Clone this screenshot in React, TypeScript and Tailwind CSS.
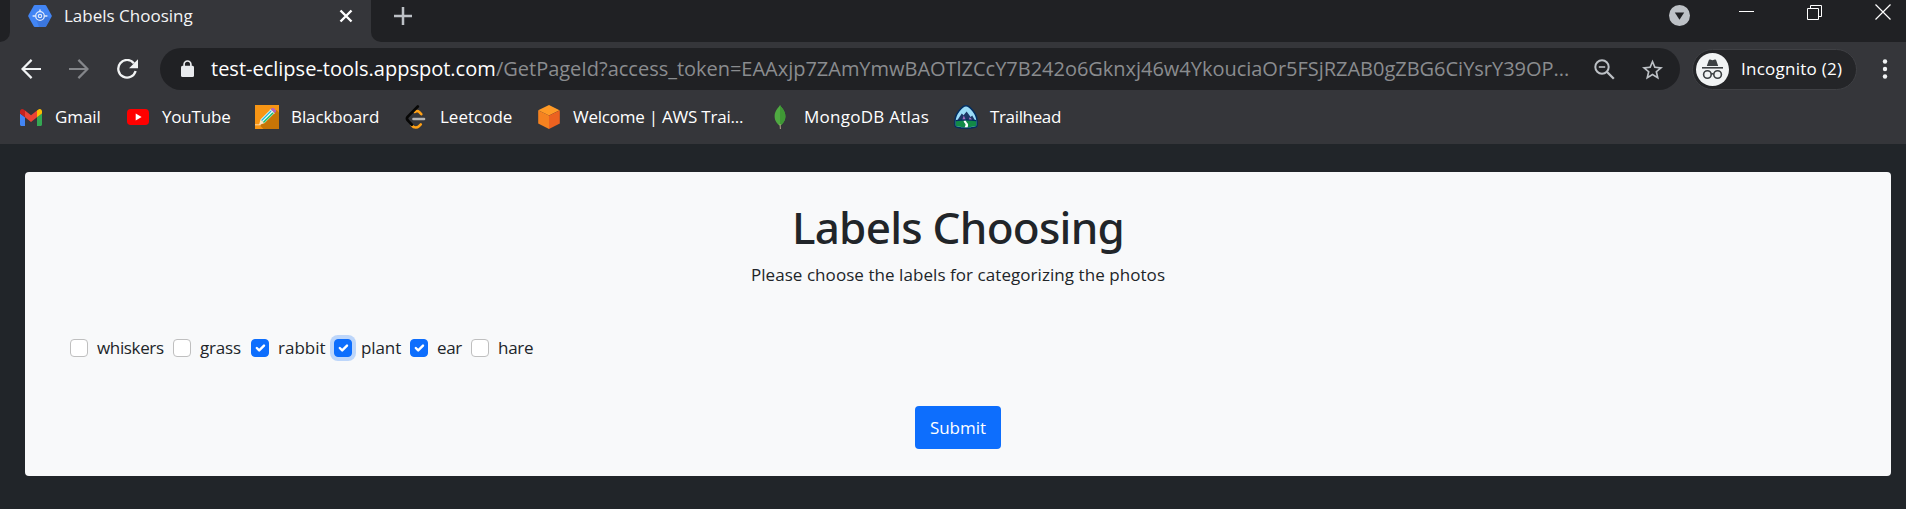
import type { ReactNode } from "react";

function CloudIcon() {
  return (
    <svg width="24" height="22" viewBox="0 0 24 22">
      <path d="M6.800 0h10.400q.7 0 1.100.7l5.300 9.500q.4.8 0 1.600l-5.300 9.500q-.4.7-1.100.7H6.800q-.7 0-1.100-.7L.4 11.800q-.4-.8 0-1.600L5.700.7Q6.100 0 6.800 0z" fill="#4285f4" />
      <path d="M16 8l6 6-3.800 7.200q-.4.8-1.100.8h-6L8 14z" fill="#3367c6" opacity=".45" />
      <g fill="none" stroke="#dfeafd">
        <circle cx="12" cy="11" r="4.300" strokeWidth="1.300" />
        <circle cx="12" cy="11" r="1.700" strokeWidth="1.200" />
        <path d="M4.600 11h3M16.400 11h3M12 4.500v2.200" strokeWidth="1.500" />
      </g>
    </svg>
  );
}

function GmailIcon() {
  return (
    <svg width="22" height="17" viewBox="52 42 88 66" preserveAspectRatio="none">
      <path fill="#4285f4" d="M58 108h14V74L52 59v43c0 3.320 2.690 6 6 6" />
      <path fill="#34a853" d="M120 108h14c3.320 0 6-2.690 6-6V59l-20 15" />
      <path fill="#fbbc04" d="M120 48v26l20-15v-8c0-7.420-8.470-11.650-14.400-7.200" />
      <path fill="#ea4335" d="M72 74V48l24 18 24-18v26L96 92" />
      <path fill="#c5221f" d="M52 51v8l20 15V48l-5.600-4.200c-5.940-4.450-14.400-.22-14.400 7.200" />
    </svg>
  );
}

function YouTubeIcon() {
  return (
    <svg width="22" height="16" viewBox="0 0 22 16">
      <rect width="22" height="16" rx="3.800" fill="#f00" />
      <path d="M8.700 4.600v6.800l5.900-3.400z" fill="#fff" />
    </svg>
  );
}

function PencilIcon() {
  return (
    <svg width="24" height="24" viewBox="0 0 24 24">
      <rect width="24" height="24" fill="#f79514" />
      <path d="M21.500 5L24 7.500V24H8.500L4 19.500z" fill="#c87506" />
      <path d="M0 19.800h6" stroke="#fbd9a5" strokeWidth="1" />
      <path d="M4 20l1.500-5.500 3.800 3.800z" fill="#fde3c0" />
      <path d="M5.500 14.500L15.800 4.200l3.800 3.800L9.300 18.300z" fill="#e9fbff" />
      <path d="M6.600 15.500L16.800 5.300" stroke="#25b8d8" strokeWidth="1.300" />
      <path d="M8.500 17.400L18.700 7.200" stroke="#1ec06a" strokeWidth="1.500" />
      <path d="M15.800 4.200l1-1q1-.8 2 0l1.800 1.800q.9 1 0 2l-1 1z" fill="#b265c4" />
      <path d="M15.300 4.700l3.800 3.800" stroke="#e7f0f4" strokeWidth="1" />
    </svg>
  );
}

function LeetcodeIcon() {
  return (
    <svg width="22" height="24" viewBox="0 0 22 24" fill="none" strokeLinecap="round">
      <path d="M9.500 7l2-1q1.500-.2 2.600.9l2.200 2.300" stroke="#ffa116" strokeWidth="2.600" />
      <path d="M6.800 20.500q1.500 2 4 2 1.800 0 3-1.200l2-2" stroke="#ffa116" strokeWidth="2.600" />
      <path d="M12.800 1.500L2.600 11.800q-1.300 1.600 0 3.400l4.200 4.500" stroke="#070706" strokeWidth="2.700" />
      <path d="M8.500 14h10.500" stroke="#b3b3b3" strokeWidth="2.600" />
    </svg>
  );
}

function CubeIcon() {
  return (
    <svg width="22" height="24" viewBox="0 0 22 24">
      <path d="M11 0l10.500 5.200L11 10.400.2 5.200z" fill="#ff9a26" />
      <path d="M.2 5.200L11 10.400V24L.2 18.400z" fill="#f58220" />
      <path d="M21.800 5.200L11 10.400V24l10.800-5.600z" fill="#ec6220" />
    </svg>
  );
}

function LeafIcon() {
  return (
    <svg width="12" height="24" viewBox="0 0 12 24">
      <path d="M6 0c.6 2 5.400 5 5.400 11.300 0 5-3.200 8-4.900 9.200h-1C3.800 19.300.6 16.300.6 11.300.6 5 5.400 2 6 0z" fill="#4faa41" />
      <path d="M6 0c.6 2 5.400 5 5.400 11.300 0 5-3.200 8-4.900 9.200H6z" fill="#3f9835" />
      <path d="M5.600 19h.9l.4 5H5.900z" fill="#b8a58c" />
    </svg>
  );
}

function TrailheadIcon() {
  return (
    <svg width="24" height="24" viewBox="0 0 24 24">
      <path d="M12 .8c3.800 0 11 8.200 11 15.200v4.200q0 1.400-1.400 1.700-9.600 2.400-19.200 0Q1 21.600 1 20.200V16C1 9 8.200.8 12 .8z" fill="#9bdcf8" stroke="#032e61" strokeWidth="1.500" />
      <path d="M3 15.800L7.800 8.500l1.800 1.800L12.600 6.500l4 5.500 1.600-1.500 3 5.300z" fill="#1d3767" />
      <path d="M8 15.800l1.800-5.300 2.400 5.300zM14.200 15.800l1.500-3.600 1.500 1.300 1 2.300z" fill="#a76cc0" />
      <path d="M1.800 15.800q10.200-1.600 20.400 0v4.500q0 .8-.8 1-9.400 2.200-18.800 0-.8-.2-.8-1z" fill="#128a47" />
      <path d="M9.800 15.600h2.400q-.6 1.300 1 2.300 1.600 1.200.4 4.300h-3q1.800-2.800.2-4-1.600-1.200-1-2.600z" fill="#fff" />
      <path d="M1.800 15.700q10.200-1.500 20.400 0" stroke="#032e61" strokeWidth="1.200" fill="none" />
    </svg>
  );
}

const bookmarks: { label: string; icon: ReactNode; width: string; track: string }[] = [
  { label: "Gmail", icon: <GmailIcon />, width: "w-[107px]", track: "tracking-[-0.1px]" },
  { label: "YouTube", icon: <YouTubeIcon />, width: "w-[129px]", track: "tracking-[-0.2px]" },
  { label: "Blackboard", icon: <PencilIcon />, width: "w-[149px]", track: "tracking-[-0.1px]" },
  { label: "Leetcode", icon: <LeetcodeIcon />, width: "w-[133px]", track: "tracking-[0px]" },
  { label: "Welcome | AWS Trai...", icon: <CubeIcon />, width: "w-[231px]", track: "tracking-[-0.23px]" },
  { label: "MongoDB Atlas", icon: <LeafIcon />, width: "w-[186px]", track: "tracking-[0.25px]" },
  { label: "Trailhead", icon: <TrailheadIcon />, width: "w-[120px]", track: "tracking-[-0.35px]" },
];

const choices: { label: string; checked?: boolean; focused?: boolean; width: string; track: string }[] = [
  { label: "whiskers", width: "w-[103px]", track: "tracking-[-0.35px]" },
  { label: "grass", width: "w-[78px]", track: "tracking-[-0.2px]" },
  { label: "rabbit", checked: true, width: "w-[83px]", track: "tracking-[0px]" },
  { label: "plant", checked: true, focused: true, width: "w-[76px]", track: "tracking-[-0.1px]" },
  { label: "ear", checked: true, width: "w-[61px]", track: "tracking-[-0.4px]" },
  { label: "hare", width: "w-[80px]", track: "tracking-[-0.25px]" },
];

function Checkbox({ checked, focused }: { checked?: boolean; focused?: boolean }) {
  const color = checked ? "border-[#0d6efd] bg-[#0d6efd]" : "border-[#bfbfbf] bg-white";
  const ring = focused ? "ring-4 ring-[#0d6efd]/25" : "";
  return (
    <span role="checkbox" aria-checked={!!checked} className={`flex h-[18px] w-[18px] shrink-0 items-center justify-center rounded-[4px] border ${color} ${ring}`}>
      {checked && (
        <svg width="16" height="16" viewBox="0 0 20 20" fill="none" stroke="#fff" strokeWidth="3" strokeLinecap="round" strokeLinejoin="round">
          <path d="M6 10l3 3 6-6" />
        </svg>
      )}
    </span>
  );
}

function TabStrip() {
  return (
    <div className="flex h-[42px] bg-[#35363a]">
      <div className="h-[42px] w-[10px] rounded-br-[10px] bg-[#202124]" />
      <div className="flex h-8 w-[361px] items-center pl-[18px]">
        <CloudIcon />
        <span className="ml-[12px] w-[275px] text-[17px] tracking-[0px] text-[#f3f4f5]">Labels Choosing</span>
        <svg width="14" height="14" viewBox="0 0 14 14" stroke="#fff" strokeWidth="2.400" className="shrink-0">
          <path d="M1.500 1.500l11 11M12.500 1.500l-11 11" />
        </svg>
      </div>
      <div className="flex h-[42px] flex-1 items-start rounded-bl-[10px] bg-[#202124]">
        <svg width="18" height="18" viewBox="0 0 18 18" stroke="#bdc1c6" strokeWidth="2.500" className="mt-[7px] ml-[23px]">
          <path d="M9 0v18M0 9h18" />
        </svg>
        <div className="flex-1" />
        <svg width="21" height="21" viewBox="0 0 21 21" className="mt-[5px] mr-[49px]">
          <circle cx="10.500" cy="10.500" r="10.500" fill="#bdc1c6" />
          <path d="M5.800 7.500h9.400l-4.700 7.300z" fill="#202124" />
        </svg>
        <svg width="15" height="1" viewBox="0 0 15 1" className="mt-[11px] mr-[53px]">
          <rect width="15" height="1" fill="#fff" />
        </svg>
        <svg width="15" height="15" viewBox="0 0 15 15" fill="none" stroke="#fff" className="mt-[5px] mr-[53px]">
          <path d="M.5 3.500h11v11H.5zM3.500 3V.5h11v11H12" />
        </svg>
        <svg width="16" height="16" viewBox="0 0 16 16" stroke="#fff" strokeWidth="1.200" className="mt-[4px] mr-[15px]">
          <path d="M.5.5l15 15M15.500.5l-15 15" />
        </svg>
      </div>
    </div>
  );
}

function Toolbar() {
  return (
    <div className="flex h-[54px] items-center pl-[21px]">
      <svg width="20" height="20" viewBox="0 0 20 20" fill="none" stroke="#f1f3f4" strokeWidth="2.200" className="mb-px">
        <path d="M20 10H1.800M10.600 .9L1.500 10l9.100 9.100" />
      </svg>
      <svg width="20" height="20" viewBox="0 0 20 20" fill="none" stroke="#84868a" strokeWidth="2.200" className="mb-px ml-[28px]">
        <path d="M0 10h18.200M9.400 .9l9.100 9.100-9.100 9.100" />
      </svg>
      <svg width="21" height="20" viewBox="0 0 21 20" className="mb-px ml-[28px]">
        <path d="M16.900 4.200A8.800 8.800 0 1 0 18.600 12" fill="none" stroke="#f1f3f4" strokeWidth="2.300" />
        <path d="M21 .3v8.900h-8.900z" fill="#f1f3f4" />
      </svg>
      <div className="ml-[22px] flex h-[42px] w-[1520px] items-center rounded-full bg-[#202124]">
        <svg width="13" height="17" viewBox="0 0 13 17" className="mb-px ml-[21px]">
          <path d="M3.100 7V4.400a3.400 3.400 0 0 1 6.800 0V7" fill="none" stroke="#e8eaed" strokeWidth="1.700" />
          <rect y="5.800" width="13" height="11.200" rx="1.500" fill="#e8eaed" />
        </svg>
        <span className="ml-[17px] w-[285px] whitespace-nowrap text-[20px] tracking-[0px] text-white">test-eclipse-tools.appspot.com</span>
        <span className="w-[1098px] whitespace-nowrap text-[20px] tracking-[-0.02px] text-[#8a8c8f]">
          /GetPageId?access_token=EAAxjp7ZAmYmwBAOTlZCcY7B242o6Gknxj46w4YkouciaOr5FSjRZAB0gZBG6CiYsrY39OP...
        </span>
        <svg width="21" height="21" viewBox="0 0 21 21" fill="none" stroke="#bdc1c6" className="shrink-0">
          <circle cx="8" cy="8" r="6.700" strokeWidth="2" />
          <path d="M4.800 8h6.400" strokeWidth="1.600" />
          <path d="M12.800 12.800l7 7" strokeWidth="2.300" />
        </svg>
        <svg width="21" height="21" viewBox="2 2 20 19" className="ml-[27px] shrink-0">
          <path fill="#bdc1c6" d="M22 9.240l-7.190-.62L12 2 9.190 8.630 2 9.240l5.460 4.730L5.820 21 12 17.270 18.180 21l-1.630-7.030L22 9.240zM12 15.400l-3.760 2.270 1-4.280-3.320-2.880 4.380-.38L12 6.100l1.710 4.040 4.380.38-3.320 2.880 1 4.280L12 15.400z" />
        </svg>
      </div>
      <div className="ml-[12px] flex h-[41px] w-[165px] items-center rounded-full border border-[#3f4044] bg-[#242528] pl-[3px]">
        <svg width="33" height="33" viewBox="0 0 33 33" className="shrink-0">
          <circle cx="16.500" cy="16.500" r="16.500" fill="#f1f3f4" />
          <g fill="#3c4043">
            <path d="M10.800 13l1.900-5.600q.4-1.100 1.500-.8l2.300.6 2.300-.6q1.100-.3 1.500.8l1.900 5.600z" />
            <rect x="6" y="14" width="21" height="1.600" />
          </g>
          <g fill="none" stroke="#3c4043" strokeWidth="1.600">
            <circle cx="11.400" cy="21.500" r="3.800" />
            <circle cx="21.600" cy="21.500" r="3.800" />
            <path d="M15.200 21.200q1.300-1 2.600 0" />
          </g>
        </svg>
        <span className="mb-px ml-[12px] whitespace-nowrap text-[17px] tracking-[0.25px] text-white">Incognito (2)</span>
      </div>
      <svg width="6" height="20" viewBox="0 0 6 20" fill="#f1f3f4" className="mb-px ml-[25px] shrink-0">
        <circle cx="3" cy="2.500" r="2.200" />
        <circle cx="3" cy="10" r="2.200" />
        <circle cx="3" cy="17.500" r="2.200" />
      </svg>
    </div>
  );
}

export default function App() {
  return (
    <div className="flex h-[509px] w-[1906px] flex-col overflow-hidden bg-[#212529] font-['Open_Sans',sans-serif]">
      <header className="h-[144px] shrink-0 bg-[#35363a]">
        <TabStrip />
        <Toolbar />
        <nav className="flex h-[42px] items-center pl-[19px]">
          {bookmarks.map((b) => (
            <a key={b.label} className={`flex shrink-0 items-center gap-[12px] ${b.width}`}>
              <span className="flex h-6 w-6 shrink-0 items-center justify-center">{b.icon}</span>
              <span className={`whitespace-nowrap text-[17px] text-white ${b.track}`}>{b.label}</span>
            </a>
          ))}
        </nav>
      </header>
      <main className="mt-[28px] mr-[15px] ml-[25px] flex h-[304px] flex-col items-center rounded-[4px] bg-[#f8f9fa] pt-[29px] text-[#212529]">
        <h1 className="h-[53px] font-['Noto_Sans',sans-serif] text-[44px] leading-[53px] font-medium tracking-[-0.75px]">Labels Choosing</h1>
        <p className="mt-[8px] h-[26px] text-[17px] leading-[26px] tracking-[0.06px]">Please choose the labels for categorizing the photos</p>
        <form className="mt-[47px] flex h-[26px] self-stretch pl-[45px]">
          {choices.map((c) => (
            <label key={c.label} className={`flex items-center gap-[9px] ${c.width}`}>
              <Checkbox checked={c.checked} focused={c.focused} />
              <span className={`text-[17px] leading-[26px] ${c.track}`}>{c.label}</span>
            </label>
          ))}
        </form>
        <button className="mt-[45px] h-[43px] w-[86px] rounded-[4px] bg-[#0d6efd] text-[17px] text-white">Submit</button>
      </main>
    </div>
  );
}
